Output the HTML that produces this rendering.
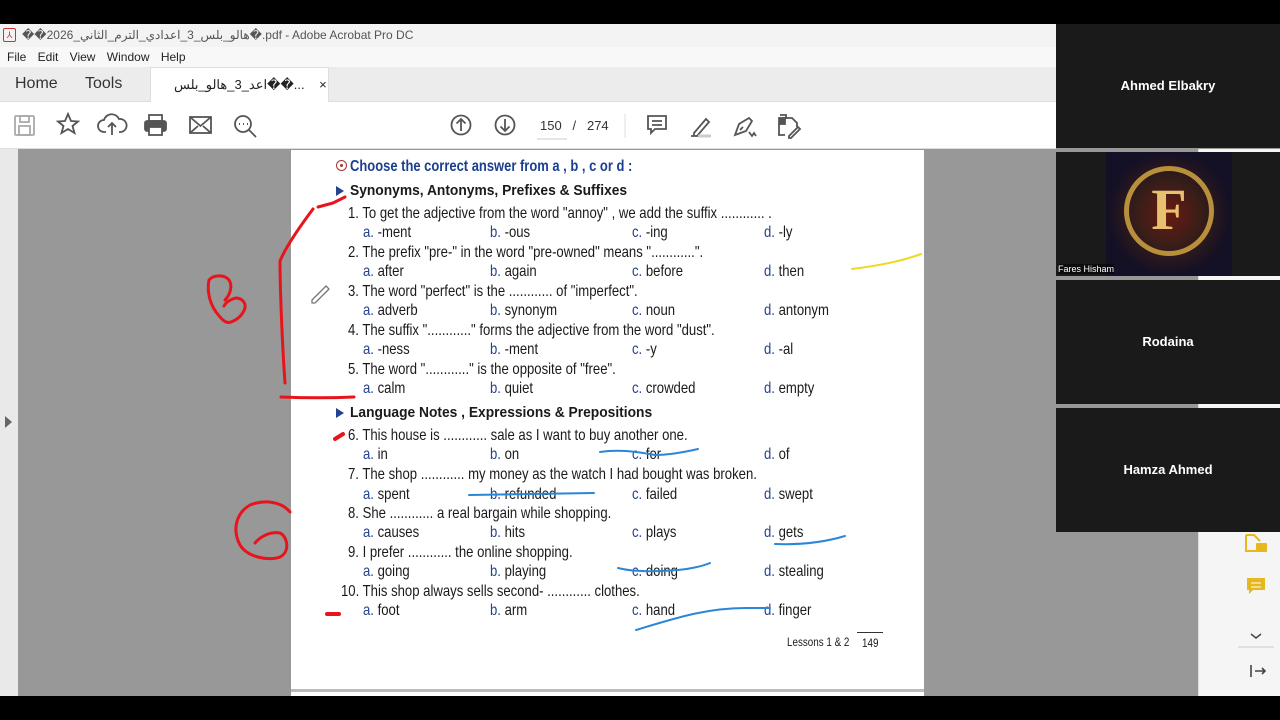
<!DOCTYPE html>
<html><head><meta charset="utf-8"><style>
*{margin:0;padding:0;box-sizing:border-box}
html,body{width:1280px;height:720px;background:#989898}
body{position:relative;overflow:hidden;font-family:"Liberation Sans","Noto Sans CJK SC",sans-serif}
.a{position:absolute;white-space:nowrap}
.t{font-family:"Liberation Sans",sans-serif;font-size:16px;color:#1a1a1a;transform:scaleX(.82);transform-origin:left center;line-height:18px}
.o{color:#1a1a1a}
.o b{font-weight:normal;color:#24428f}
.tile{position:absolute;left:1056px;width:224px;height:124px;background:#1a1a1a;color:#fff;font-weight:bold;font-size:13px;text-align:center;line-height:124px}
</style></head><body>
<div class="a" style="left:0;top:0;width:1280px;height:24px;background:#000"></div>
<div class="a" style="left:0;top:696px;width:1280px;height:24px;background:#000"></div>
<div class="a" style="left:0;top:24px;width:1056px;height:23px;background:#f3f3f3;font-size:12px;color:#555;line-height:23px;padding-left:22px">��هالو_بلس_3_اعدادي_الترم_الثاني_2026�.pdf - Adobe Acrobat Pro DC</div>
<div class="a" style="left:3px;top:28px;width:13px;height:14px;border:1px solid #c33;border-radius:2px;color:#c33;font-size:9px;text-align:center;line-height:12px">⅄</div>
<div class="a" style="left:0;top:47px;width:1056px;height:20px;background:#f8f8f8;font-size:12px;color:#222;line-height:20px;padding-left:7px;word-spacing:8px">File Edit View Window Help</div>
<div class="a" style="left:0;top:67px;width:1056px;height:35px;background:#ececec;border-bottom:1px solid #ddd"></div>
<div class="a" style="left:15px;top:75px;font-size:16px;color:#333">Home</div>
<div class="a" style="left:85px;top:75px;font-size:16px;color:#333">Tools</div>
<div class="a" style="left:150px;top:67px;width:179px;height:36px;background:#fff;border:1px solid #ddd;border-bottom:none;font-size:13px;color:#222;line-height:34px;padding-left:23px">اعد_3_هالو_بلس��...&nbsp;&nbsp;&nbsp; ×</div>
<div class="a" style="left:0;top:102px;width:1056px;height:47px;background:#fff;border-bottom:1px solid #ddd"></div>
<svg class="a" style="left:0;top:102px" width="1056" height="47" fill="none" stroke="#555" stroke-width="1.8">
<rect x="15" y="14" width="19" height="19" rx="1" stroke="#aaa"/><rect x="20" y="14" width="9" height="6" stroke="#aaa"/><rect x="19" y="24" width="11" height="9" stroke="#aaa"/>
<path d="M68 12l3 7 7 .5-5.5 4.5 2 7-6.5-4-6.5 4 2-7-5.5-4.5 7-.5z"/>
<path d="M106 30h-2a6 6 0 0 1 0-12 8 8 0 0 1 15-1 6 6 0 0 1 2 13h-2M112 33v-12m-4 4l4-4 4 4"/>
<rect x="145" y="19" width="21" height="10" rx="2" fill="#555"/><rect x="149" y="13" width="13" height="6"/><rect x="149" y="25" width="13" height="8" fill="#fff"/>
<rect x="190" y="15" width="21" height="16"/><path d="M190 15l10.5 9 10.5-9M190 31l8-7M211 31l-8-7"/>
<circle cx="243" cy="22" r="8"/><path d="M249 28l7 7"/><path d="M239 22h1M243 22h1M247 22h1" stroke-width="2"/>
<circle cx="461" cy="23" r="9.5"/><path d="M461 29v-12m-4.5 4.5l4.5-4.5 4.5 4.5"/>
<circle cx="505" cy="23" r="9.5"/><path d="M505 17v12m-4.5-4.5l4.5 4.5 4.5-4.5"/>
<path d="M537 37h30" stroke="#ccc" stroke-width="1"/>
<path d="M625 12v24" stroke="#ddd" stroke-width="1"/>
<path d="M648 14h18v13h-11l-4 4v-4h-3z"/><path d="M652 19h10M652 23h10"/>
<path d="M694 31l12-14 3 3-12 14h-3zM691 34h20" /><path d="M698 34h13" stroke="#ccc" stroke-width="3"/>
<path d="M735 33l4-11 10-6 3 3-6 10-11 4zM740 28l3-3M749 30l3 4 2-3 2 3"/>
<path d="M782 16h10l5 5v4M779 22v11h6M786 17v-4h-6" /><rect x="779" y="16" width="6" height="6" fill="#555"/><path d="M789 34l9-9 2 2-9 9h-2z"/>
</svg>
<div class="a" style="left:540px;top:118px;font-size:13px;color:#333">150 &nbsp;&nbsp;/ &nbsp;&nbsp;274</div>
<div class="a" style="left:0;top:149px;width:18px;height:547px;background:#e9e9e9"></div>
<div class="a" style="left:5px;top:416px;border-left:7px solid #666;border-top:6px solid transparent;border-bottom:6px solid transparent"></div>
<div class="a" style="left:291px;top:150px;width:633px;height:539px;background:#fff"></div>
<div class="a" style="left:291px;top:689px;width:633px;height:7px;background:#fff;border-top:3px solid #bbb"></div>
<div class="a" style="left:336px;top:160px;width:11px;height:11px;border:1.5px solid #a33;border-radius:50%"></div>
<div class="a" style="left:340px;top:164px;width:3px;height:3px;background:#a33;border-radius:50%"></div>
<div class="a t" style="left:350px;top:158px;font-size:16px;font-weight:bold;color:#1b3f8f;transform:scaleX(.81)">Choose the correct answer from a , b , c or d :</div>
<div class="a" style="left:336px;top:186px;border-left:8px solid #24428f;border-top:5px solid transparent;border-bottom:5px solid transparent"></div>
<div class="a t" style="left:350px;top:182px;font-size:15px;font-weight:bold;transform:scaleX(.92)">Synonyms, Antonyms, Prefixes &amp; Suffixes</div>
<div class="a" style="left:336px;top:408px;border-left:8px solid #24428f;border-top:5px solid transparent;border-bottom:5px solid transparent"></div>
<div class="a t" style="left:350px;top:404px;font-size:15px;font-weight:bold;transform:scaleX(.92)">Language Notes , Expressions &amp; Prepositions</div>

<div class="a t" style="left:348px;top:205px">1. To get the adjective from the word "annoy" , we add the suffix ............ .</div>
<div class="a t o" style="left:363px;top:224px"><b>a.</b> -ment</div><div class="a t o" style="left:490px;top:224px"><b>b.</b> -ous</div><div class="a t o" style="left:632px;top:224px"><b>c.</b> -ing</div><div class="a t o" style="left:764px;top:224px"><b>d.</b> -ly</div>
<div class="a t" style="left:348px;top:244px">2. The prefix "pre-" in the word "pre-owned" means "............".</div>
<div class="a t o" style="left:363px;top:263px"><b>a.</b> after</div><div class="a t o" style="left:490px;top:263px"><b>b.</b> again</div><div class="a t o" style="left:632px;top:263px"><b>c.</b> before</div><div class="a t o" style="left:764px;top:263px"><b>d.</b> then</div>
<div class="a t" style="left:348px;top:283px">3. The word "perfect" is the ............ of "imperfect".</div>
<div class="a t o" style="left:363px;top:302px"><b>a.</b> adverb</div><div class="a t o" style="left:490px;top:302px"><b>b.</b> synonym</div><div class="a t o" style="left:632px;top:302px"><b>c.</b> noun</div><div class="a t o" style="left:764px;top:302px"><b>d.</b> antonym</div>
<div class="a t" style="left:348px;top:322px">4. The suffix "............" forms the adjective from the word "dust".</div>
<div class="a t o" style="left:363px;top:341px"><b>a.</b> -ness</div><div class="a t o" style="left:490px;top:341px"><b>b.</b> -ment</div><div class="a t o" style="left:632px;top:341px"><b>c.</b> -y</div><div class="a t o" style="left:764px;top:341px"><b>d.</b> -al</div>
<div class="a t" style="left:348px;top:361px">5. The word "............" is the opposite of "free".</div>
<div class="a t o" style="left:363px;top:380px"><b>a.</b> calm</div><div class="a t o" style="left:490px;top:380px"><b>b.</b> quiet</div><div class="a t o" style="left:632px;top:380px"><b>c.</b> crowded</div><div class="a t o" style="left:764px;top:380px"><b>d.</b> empty</div>

<div class="a t" style="left:348px;top:427px">6. This house is ............ sale as I want to buy another one.</div>
<div class="a t o" style="left:363px;top:446px"><b>a.</b> in</div><div class="a t o" style="left:490px;top:446px"><b>b.</b> on</div><div class="a t o" style="left:632px;top:446px"><b>c.</b> for</div><div class="a t o" style="left:764px;top:446px"><b>d.</b> of</div>
<div class="a t" style="left:348px;top:466px">7. The shop ............ my money as the watch I had bought was broken.</div>
<div class="a t o" style="left:363px;top:486px"><b>a.</b> spent</div><div class="a t o" style="left:490px;top:486px"><b>b.</b> refunded</div><div class="a t o" style="left:632px;top:486px"><b>c.</b> failed</div><div class="a t o" style="left:764px;top:486px"><b>d.</b> swept</div>
<div class="a t" style="left:348px;top:505px">8. She ............ a real bargain while shopping.</div>
<div class="a t o" style="left:363px;top:524px"><b>a.</b> causes</div><div class="a t o" style="left:490px;top:524px"><b>b.</b> hits</div><div class="a t o" style="left:632px;top:524px"><b>c.</b> plays</div><div class="a t o" style="left:764px;top:524px"><b>d.</b> gets</div>
<div class="a t" style="left:348px;top:544px">9. I prefer ............ the online shopping.</div>
<div class="a t o" style="left:363px;top:563px"><b>a.</b> going</div><div class="a t o" style="left:490px;top:563px"><b>b.</b> playing</div><div class="a t o" style="left:632px;top:563px"><b>c.</b> doing</div><div class="a t o" style="left:764px;top:563px"><b>d.</b> stealing</div>
<div class="a t" style="left:341px;top:583px">10. This shop always sells second- ............ clothes.</div>
<div class="a t o" style="left:363px;top:602px"><b>a.</b> foot</div><div class="a t o" style="left:490px;top:602px"><b>b.</b> arm</div><div class="a t o" style="left:632px;top:602px"><b>c.</b> hand</div><div class="a t o" style="left:764px;top:602px"><b>d.</b> finger</div>
<div class="a t" style="left:787px;top:633px;font-size:12px">Lessons 1 &amp; 2</div>
<div class="a" style="left:857px;top:632px;width:26px;border-top:1px solid #333"></div>
<div class="a t" style="left:862px;top:634px;font-size:12px">149</div>
<svg class="a" style="left:0;top:0" width="1056" height="720" fill="none" stroke-linecap="round" stroke-linejoin="round">
<g stroke="#e8141c" stroke-width="3">
<path d="M345 197l-12 6-15 4M313 209c-15 20-28 40-33 52 0 25 2 80 5 122"/>
<path d="M281 397c25 1 50 1 73 0"/>
<path d="M209 280c-2 10 0 22 7 32 6 8 10 12 15 10 8-3 12-8 14-14 1-6-4-10-9-10-5 1-10 4-12 8M209 280c4-5 15-6 20 0 4 6 1 15-4 20"/>
<path d="M290 512c-8-10-25-13-40-7-14 8-18 25-10 40 8 13 30 16 40 12 10-5 8-20 0-24-10-2-20 4-25 10"/>
<path d="M335 439l8-5" stroke-width="4"/><path d="M327 614h12" stroke-width="4"/>
</g>
<path d="M852 269c25-3 50-8 69-15" stroke="#f0d820" stroke-width="2"/>
<g stroke="#2a86d6" stroke-width="2">
<path d="M600 452c20-3 40 0 55 3 15 0 30-3 43-6"/>
<path d="M469 495c40-1 85-1 125-2"/>
<path d="M775 544c25 1 50-2 70-8"/>
<path d="M618 568c20 5 45 3 60 2 12-1 25-4 32-7"/>
<path d="M636 630c40-12 70-22 110-22h24"/>
</g>
<path d="M312 300l14-14 3 3-14 14h-3z" stroke="#777" stroke-width="1.3"/>
</svg>
<div class="a" style="left:1198px;top:149px;width:82px;height:547px;background:#f5f5f5;border-left:1px solid #ddd"></div>
<svg class="a" style="left:1198px;top:530px" width="82" height="166" fill="none">
<path d="M48 5v16h10M48 5h8l6 6" stroke="#e5b820" stroke-width="2"/><rect x="58" y="13" width="11" height="9" rx="1" fill="#e5b820"/>
<path d="M49 48h18v12h-12l-4 4v-4h-2z" fill="#e5b820"/><path d="M53 53h10M53 57h10" stroke="#fff"/>
<path d="M53 104l5 4 5-4" stroke="#444" stroke-width="1.5"/><path d="M40 117h36" stroke="#ccc"/>
<path d="M53 135v12M57 141h10m-3-3l3 3-3 3" stroke="#444" stroke-width="1.6"/>
</svg>
<div class="tile" style="top:24px">Ahmed Elbakry</div>
<div class="tile" style="top:152px;line-height:normal">
<div style="position:absolute;left:50px;top:0;width:126px;height:124px;background:radial-gradient(circle at 50% 50%,#6a1a10 0,#3a1e18 35%,#141025 70%)">
<div style="position:absolute;left:18px;top:14px;width:90px;height:90px;border:5px solid #b8903c;border-radius:50%"></div>
<div style="position:absolute;left:0;width:126px;top:28px;font-family:'Liberation Serif',serif;font-size:58px;color:#e8c070;text-align:center;line-height:60px">F</div>
</div>
<div style="position:absolute;left:2px;bottom:2px;font-size:9px;font-weight:normal;color:#fff;background:rgba(0,0,0,.5)">Fares Hisham</div>
</div>
<div class="tile" style="top:280px">Rodaina</div>
<div class="tile" style="top:408px">Hamza Ahmed</div>
</body></html>
